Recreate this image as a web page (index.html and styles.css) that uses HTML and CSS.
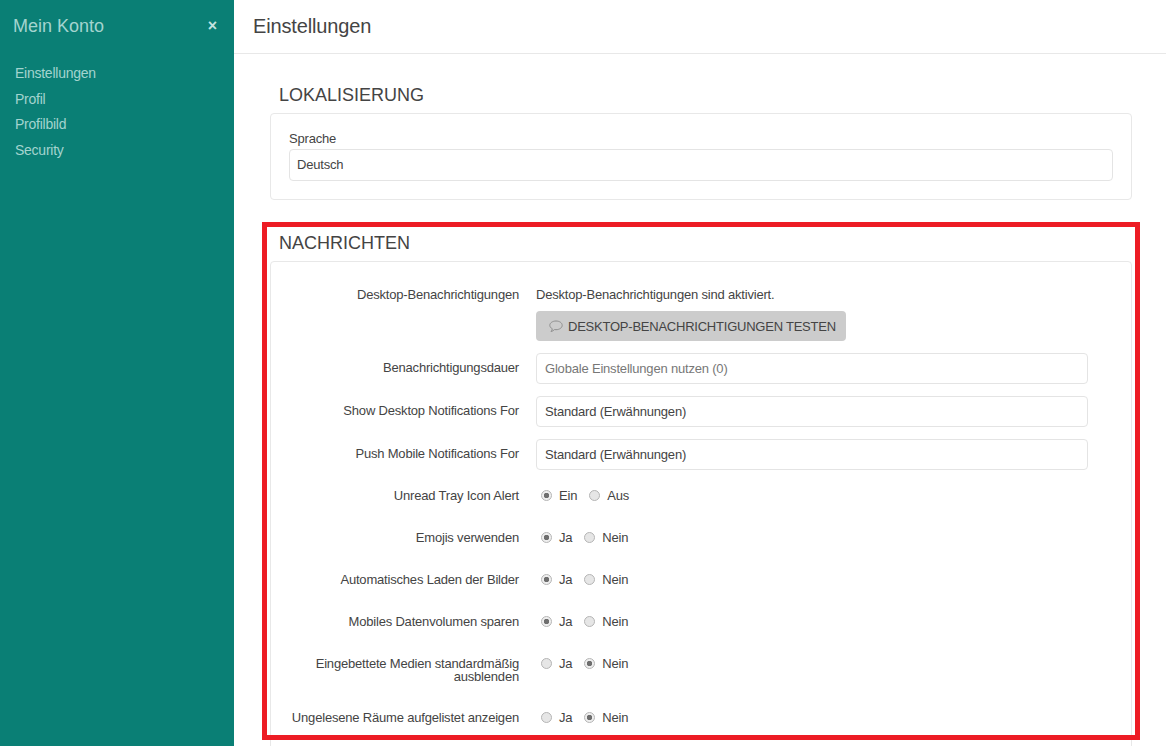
FILE: index.html
```html
<!DOCTYPE html>
<html lang="de">
<head>
    <meta charset="UTF-8">
    <title>Einstellungen</title>
    <link rel="stylesheet" href="styles.css">
</head>
<body>
    <aside class="sidebar">
        <div class="sidebar-head">
            <span class="sidebar-title">Mein Konto</span>
            <span class="sidebar-close">×</span>
        </div>
        <nav class="sidebar-nav">
            <a>Einstellungen</a>
            <a>Profil</a>
            <a>Profilbild</a>
            <a>Security</a>
        </nav>
    </aside>

    <main class="main">
        <header class="page-head">
            <h1>Einstellungen</h1>
        </header>

        <div class="content">
            <section class="group group-locale">
                <h2>LOKALISIERUNG</h2>
                <div class="panel panel-locale">
                    <label class="stack-label">Sprache</label>
                    <div class="field">Deutsch</div>
                </div>
            </section>

            <section class="group group-messages">
                <h2>NACHRICHTEN</h2>
                <div class="panel panel-messages">
                    <div class="row row-desktop">
                        <div class="row-label">Desktop-Benachrichtigungen</div>
                        <div class="row-control">
                            <p class="note">Desktop-Benachrichtigungen sind aktiviert.</p>
                            <button class="test-btn">
                                <svg class="bubble" width="14" height="13" viewBox="0 0 14 13"><path d="M7 1C3.600 1 .8 2.900.8 5.300c0 1.400 1 2.700 2.500 3.500-.1.9-.6 1.900-1.300 2.700 1.300-.2 2.600-.9 3.400-1.900.5.100 1 .1 1.600.1 3.400 0 6.200-1.900 6.200-4.400S10.400 1 7 1z" fill="none" stroke="#8f8f8f" stroke-width="1"/></svg>
                                <span>DESKTOP-BENACHRICHTIGUNGEN TESTEN</span>
                            </button>
                        </div>
                    </div>
                    <div class="row row-input">
                        <div class="row-label">Benachrichtigungsdauer</div>
                        <div class="row-control"><div class="field placeholder">Globale Einstellungen nutzen (0)</div></div>
                    </div>
                    <div class="row row-input">
                        <div class="row-label">Show Desktop Notifications For</div>
                        <div class="row-control"><div class="field">Standard (Erwähnungen)</div></div>
                    </div>
                    <div class="row row-input row-last-input">
                        <div class="row-label">Push Mobile Notifications For</div>
                        <div class="row-control"><div class="field">Standard (Erwähnungen)</div></div>
                    </div>
                    <div class="row">
                        <div class="row-label">Unread Tray Icon Alert</div>
                        <div class="row-control radios">
                            <span class="radio on"></span><span class="radio-text">Ein</span>
                            <span class="radio"></span><span class="radio-text">Aus</span>
                        </div>
                    </div>
                    <div class="row">
                        <div class="row-label">Emojis verwenden</div>
                        <div class="row-control radios">
                            <span class="radio on"></span><span class="radio-text">Ja</span>
                            <span class="radio"></span><span class="radio-text">Nein</span>
                        </div>
                    </div>
                    <div class="row">
                        <div class="row-label">Automatisches Laden der Bilder</div>
                        <div class="row-control radios">
                            <span class="radio on"></span><span class="radio-text">Ja</span>
                            <span class="radio"></span><span class="radio-text">Nein</span>
                        </div>
                    </div>
                    <div class="row">
                        <div class="row-label">Mobiles Datenvolumen sparen</div>
                        <div class="row-control radios">
                            <span class="radio on"></span><span class="radio-text">Ja</span>
                            <span class="radio"></span><span class="radio-text">Nein</span>
                        </div>
                    </div>
                    <div class="row">
                        <div class="row-label">Eingebettete Medien standardmäßig ausblenden</div>
                        <div class="row-control radios">
                            <span class="radio"></span><span class="radio-text">Ja</span>
                            <span class="radio on"></span><span class="radio-text">Nein</span>
                        </div>
                    </div>
                    <div class="row">
                        <div class="row-label">Ungelesene Räume aufgelistet anzeigen</div>
                        <div class="row-control radios">
                            <span class="radio"></span><span class="radio-text">Ja</span>
                            <span class="radio on"></span><span class="radio-text">Nein</span>
                        </div>
                    </div>
                </div>
            </section>
        </div>
    </main>

    <!-- red annotation drawn over the page -->
    <div class="annotation"></div>
</body>
</html>
```

FILE: styles.css
```css
* {
    box-sizing: border-box;
}

html, body {
    height: 746px;
    overflow: hidden;
}

body {
    font-family: 'Liberation Sans', Arial, sans-serif;
    font-size: 13px;
    letter-spacing: -0.19px;
    margin: 0;
    padding: 0;
    display: flex;
    position: relative;
    background-color: #fff;
    color: #444;
}

.sidebar {
    width: 234px;
    flex-shrink: 0;
    background-color: #0a7f75;
    color: #a3d4cf;
}

.sidebar-head {
    display: flex;
    justify-content: space-between;
    align-items: center;
    height: 52px;
    padding: 0 17px 0 13px;
}

.sidebar-title {
    font-size: 18px;
    letter-spacing: 0;
}

.sidebar-close {
    font-size: 16px;
    font-weight: bold;
    color: #c4e3e0;
}

.sidebar-nav {
    padding: 9px 0 0 15px;
}

.sidebar-nav a {
    display: block;
    height: 25.6px;
    line-height: 25.6px;
    font-size: 14px;
    letter-spacing: -0.25px;
}

.main {
    flex: 1;
    min-width: 0;
    height: 746px;
    display: flex;
    flex-direction: column;
}

.page-head {
    height: 54px;
    flex-shrink: 0;
    border-bottom: 1px solid #e8e8e8;
    padding-left: 19px;
}

.page-head h1 {
    margin: 0;
    font-size: 20px;
    font-weight: normal;
    letter-spacing: -0.15px;
    line-height: 52px;
    color: #444;
}

.content {
    flex: 1;
    overflow: hidden;
    padding: 0 34px 0 36px;
}

.group h2 {
    margin: 0;
    padding-left: 9px;
    font-size: 18px;
    font-weight: normal;
    letter-spacing: 0;
    line-height: 22px;
    color: #444;
}

.group-locale {
    padding-top: 30px;
}

.group-messages {
    padding-top: 32px;
}

.panel {
    margin-top: 7px;
    border: 1px solid #e8e8e8;
    border-radius: 4px;
}

.panel-locale {
    height: 87px;
    padding: 17px 18px 0;
}

.panel-messages {
    padding: 23px 0 0;
    height: 600px;
}

.stack-label {
    display: block;
    line-height: 16px;
    margin-bottom: 2px;
}

.field {
    height: 31px;
    line-height: 29px;
    padding: 0 8px;
    border: 1px solid #e4e4e4;
    border-radius: 4px;
    background-color: #fff;
}

.panel-locale .field {
    height: 32px;
    padding: 0 7px;
}

.placeholder {
    color: #777;
}

.row {
    display: flex;
    margin-bottom: 22px;
    min-height: 20px;
}

.row-label {
    width: 248px;
    flex-shrink: 0;
    text-align: right;
    padding: 3px 0;
    line-height: 13px;
}

.row-control {
    width: 552px;
    margin-left: 17px;
}

.row-desktop {
    margin-bottom: 12px;
}

.row-input {
    margin-bottom: 12px;
}

.row-input .row-label {
    padding-top: 8px;
}

.row-last-input {
    margin-bottom: 16px;
}

.note {
    margin: 0 0 6px;
    line-height: 20px;
}

.test-btn {
    display: flex;
    align-items: center;
    gap: 5px;
    height: 30px;
    width: 310px;
    padding: 0 0 0 13px;
    border: none;
    border-radius: 4px;
    background-color: #ccc;
    color: #444;
    font-family: inherit;
    font-size: 13px;
    letter-spacing: -0.23px;
    white-space: nowrap;
}

.bubble {
    flex-shrink: 0;
}

.radios {
    display: flex;
    align-items: flex-start;
    line-height: 20px;
}

.radio {
    width: 11px;
    height: 11px;
    margin: 4px 7px 0 5px;
    border: 1px solid #b5b5b5;
    border-radius: 50%;
    background-color: #e6e6e6;
    flex-shrink: 0;
}

.radio.on {
    background: radial-gradient(circle, #6e6e6e 0, #6e6e6e 2.5px, #eee 3px);
}

.radio-text {
    margin-right: 7px;
}

.annotation {
    position: absolute;
    left: 262px;
    top: 222px;
    width: 878px;
    height: 518px;
    border: 5px solid #ed1c24;
    pointer-events: none;
}
```
